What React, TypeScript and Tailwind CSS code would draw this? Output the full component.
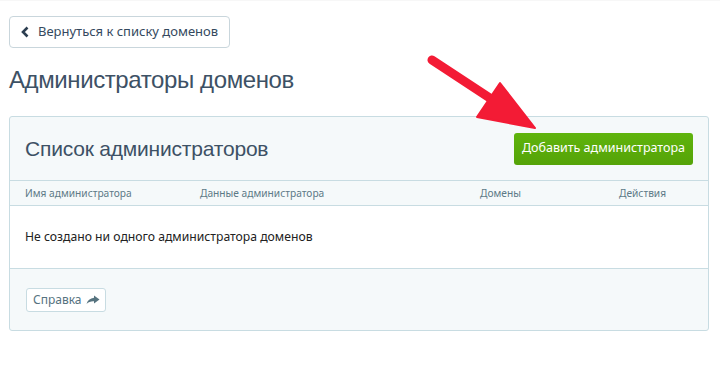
import React from "react";

const small = { fontFamily: '"Noto Sans", Tahoma, sans-serif' };
const light = { fontFamily: '"Liberation Sans", Arial, sans-serif' };

export default function App() {
  return (
    <div className="relative w-[720px] h-[380px] bg-white overflow-hidden">
      <div className="h-px bg-[#f7f7f7]" />
      <div className="px-[9px] pt-[15px]">
        <button
          className="flex items-center h-[32px] pl-[10px] pr-[11px] gap-[8px] rounded-[4px] border border-[#c9d6dc] bg-white text-[#34495e] text-[13px]"
          style={small}
        >
          <svg width="10" height="12" viewBox="0 0 10 12">
            <path d="M7.5 1.5 L3 6 L7.5 10.5" fill="none" stroke="#2c3e50" strokeWidth="2.6" strokeLinecap="butt" />
          </svg>
          <span>Вернуться к списку доменов</span>
        </button>
        <h1 className="mt-[16px] text-[24px] tracking-[-0.4px] font-normal text-[#3d5165] leading-[32px]" style={light}>
          Администраторы доменов
        </h1>
        <div className="mt-[20px] w-[700px] border border-[#c8dce2] rounded-[3px] bg-[#f5f9fa]">
          <div className="flex items-center justify-between h-[64px] pl-[15px] pr-[15px] border-b border-[#c8dce2]">
            <div className="text-[21px] tracking-[-0.2px] font-normal text-[#3d5165]" style={light}>
              Список администраторов
            </div>
            <button
              className="h-[32px] px-[8px] rounded-[3px] bg-gradient-to-b from-[#5fb40c] to-[#55a308] text-white text-[12.5px]"
              style={small}
            >
              Добавить администратора
            </button>
          </div>
          <div className="relative h-[25px] border-b border-[#c8dce2] text-[10.2px] text-[#5d7a87]" style={small}>
            <span className="absolute left-[15px] top-[5px]">Имя администратора</span>
            <span className="absolute left-[190px] top-[5px]">Данные администратора</span>
            <span className="absolute left-[470px] top-[5px]">Домены</span>
            <span className="absolute left-[609px] top-[5px]">Действия</span>
          </div>
          <div className="h-[63px] bg-white border-b border-[#c8dce2] flex items-center pl-[15px] text-[12.2px] text-[#222]" style={small}>
            Не создано ни одного администратора доменов
          </div>
          <div className="h-[61px] flex items-center pl-[16px]">
            <button
              className="h-[24px] pl-[6px] pr-[5px] flex items-center gap-[4px] rounded-[3px] border border-[#c8dce2] bg-white text-[12px] text-[#56737f]"
              style={small}
            >
              <span>Справка</span>
              <svg width="14" height="10" viewBox="0 0 14 10">
                <path d="M8 0.5 L13.5 4.5 L8 8.5 L8 6.2 C5 6 2.5 7 0.5 9 C1.5 5.5 4 3.2 8 2.8 Z" fill="#56737f" />
              </svg>
            </button>
          </div>
        </div>
      </div>
      <svg className="absolute left-0 top-0 pointer-events-none" width="720" height="380">
        <line x1="432" y1="60" x2="505" y2="108" stroke="#f31b35" strokeWidth="9" strokeLinecap="round" />
        <path d="M477 117 L500 83 L535 128 Z" fill="#f31b35" stroke="#f31b35" strokeWidth="2" strokeLinejoin="round" />
      </svg>
    </div>
  );
}
